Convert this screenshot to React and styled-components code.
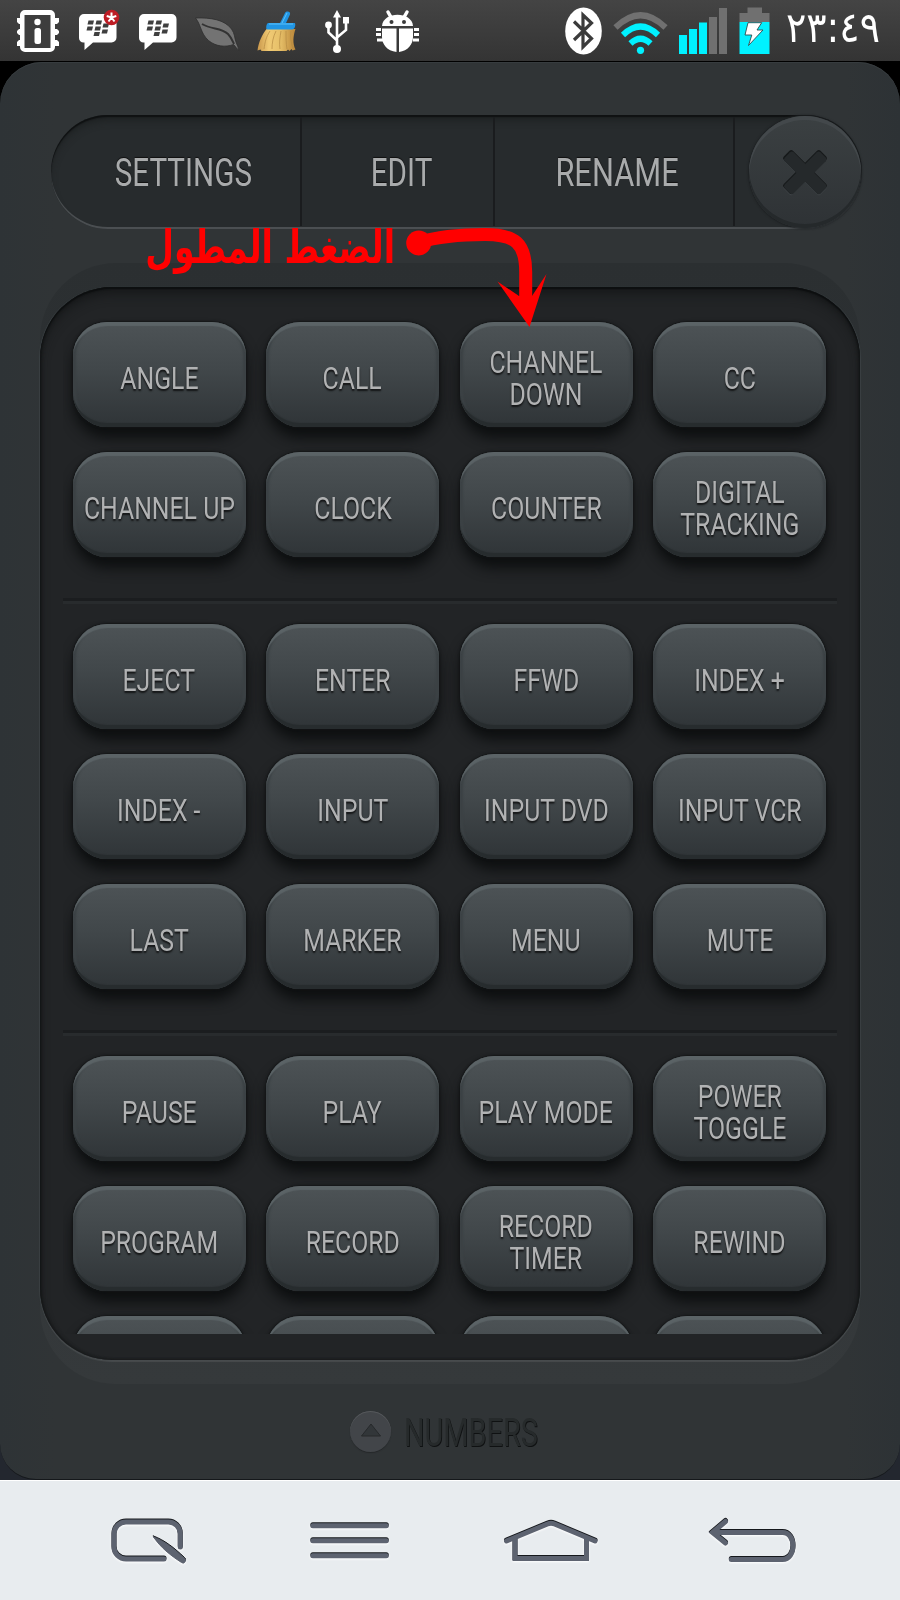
import React from "react";
import styled, { createGlobalStyle } from "styled-components";

// "\n" breaks a label over two lines
const groups = [
  ["ANGLE", "CALL", "CHANNEL\nDOWN", "CC", "CHANNEL UP", "CLOCK", "COUNTER", "DIGITAL\nTRACKING"],
  [
    "EJECT", "ENTER", "FFWD", "INDEX +", "INDEX -", "INPUT", "INPUT DVD", "INPUT VCR",
    "LAST", "MARKER", "MENU", "MUTE",
  ],
  [
    "PAUSE", "PLAY", "PLAY MODE", "POWER\nTOGGLE", "PROGRAM", "RECORD", "RECORD\nTIMER", "REWIND",
    "", "", "", "",
  ],
];

const Glyph = ({ from, to, children }) => (
  <StatusSvg width={to - from} height="61" viewBox={`${from} 0 ${to - from} 61`}>
    {children}
  </StatusSvg>
);

const Bubble = ({ x }) => (
  <g transform={`translate(${x} 0)`}>
    <path
      d="M5 14h27.500a5 5 0 0 1 5 5v18.500a5 5 0 0 1-5 5H14L5.500 50V42.500H4.500A4.500 4.500 0 0 1 0 38V19a5 5 0 0 1 5-5z"
      fill="#fff"
    />
    <g fill="#3f3f3f">
      <path d="M9.500 20.500h5.500l-1 4H8.500zM17.500 20.500H23l-1 4h-5.500z" />
      <path d="M8.500 26.500H14l-1 4H7.500zM16.500 26.500H22l-1 4h-5.500zM24.500 23.500H30l-1 4h-5.500z" />
      <path d="M23.500 29.500H29l-1 4h-5.500zM15.500 32H21l-1 4h-5.500z" />
    </g>
  </g>
);

const StatusBar = () => (
  <StatusRow>
    <Glyph from={0} to={66}>
      <path
        d="M17 18h3v-3a5 5 0 0 1 5-5h25a5 5 0 0 1 5 5v3h4v4l-2 2h-2v5h2l2 2v2l-2 2h-2v5h2l2 2v4h-4v1a5 5 0 0 1-5 5H25a5 5 0 0 1-5-5v-1h-3v-4l2-2h1v-5h-1l-2-2v-2l2-2h1v-5h-1l-2-2z"
        fill="#fff"
      />
      <path d="M24.500 15h26v33h-26z" fill="#3d3d3d" />
      <circle cx="37.500" cy="22" r="3.200" fill="#fff" />
      <rect x="34.500" y="28" width="6.500" height="16" rx="2.500" fill="#fff" />
    </Glyph>
    <Glyph from={66} to={126}>
      <Bubble x={79} />
      <circle cx="111.500" cy="17.500" r="7.800" fill="#bd1c24" />
      <path
        d="M111.500 17.500v-5M111.500 17.500l4.800-1.500M111.500 17.500l3 4M111.500 17.500l-3 4M111.500 17.500l-4.800-1.500"
        stroke="#fff"
        strokeWidth="2"
      />
    </Glyph>
    <Glyph from={126} to={186}>
      <Bubble x={139} />
    </Glyph>
    <Glyph from={186} to={248}>
      <path
        d="M195.500 18c15-.5 29 1.500 36 11 3.500 5 3 9 4.500 13 1 3 2.500 5.500 3 8.500-2-1.500-3.500-4-5.500-6-8 3-18 2-25-4-8-7-7.500-16-13-22.500z"
        fill="#737373"
        stroke="#2d2d2d"
        strokeWidth=".8"
      />
      <path d="M202 24c10 6 19 3 26 10 3 3 4.500 7 6 10" fill="none" stroke="#333" strokeWidth="2" />
    </Glyph>
    <Glyph from={248} to={308}>
      <defs>
        <linearGradient id="straw" x1="0" x2="1">
          <stop offset="0" stopColor="#c9974b" />
          <stop offset=".3" stopColor="#f0ca74" />
          <stop offset=".6" stopColor="#e6bf68" />
          <stop offset="1" stopColor="#b98538" />
        </linearGradient>
      </defs>
      <path
        d="M267 28.500c-5 6-8.500 14-9.500 22l3-1 1 1.500h25l1.500-1.500 1.500 1.500 2-2 1 1.500 3-1c-3-6-2.500-13 0-20.500z"
        fill="url(#straw)"
      />
      <path
        d="M270 31c-4 6-5 11-6 18M276 31c-3 6-4 12-4 18M281 31c-1 6-2 12-1 18M286 31c0 7 0 12 1 18M291 31c-1 6 0 11 2 18"
        stroke="#b58a42"
        strokeWidth=".7"
        fill="none"
      />
      <path d="M268 23h12l5-10c1.500-2.500 6-1.500 5 1.500L286 23h8.500c1.500 0 1 6-2 6.500H267c-1.500-1-.5-6 1-6.500z" fill="#2195e3" />
      <path d="M269 24h24M282 23l5-10" stroke="#5cc2fa" strokeWidth="1" />
    </Glyph>
    <Glyph from={308} to={362}>
      <path d="M337 16v33M328.500 25v7.500l8.500 8M346 21v9l-9 7.500" fill="none" stroke="#fff" strokeWidth="2.600" />
      <path d="M337 10l4 7.500h-8zM343 17h6v6.500h-6z" fill="#fff" />
      <circle cx="328.500" cy="25" r="3.400" fill="#fff" />
      <circle cx="337" cy="49" r="4" fill="#fff" />
    </Glyph>
    <Glyph from={362} to={432}>
      <path d="M388 12l4 7M407 12l-4 7" stroke="#fff" strokeWidth="3.500" strokeLinecap="round" />
      <path d="M382 26c1-15 30-15 31 0z" fill="#fff" />
      <circle cx="391.500" cy="22" r="2" fill="#3a3a3a" />
      <circle cx="404" cy="22" r="2" fill="#3a3a3a" />
      <path d="M382 28.500h14.500V52C387 51 382 44 382 37zM399 28.500h14V37c0 7-5 14-14 15z" fill="#fff" />
      <path
        d="M376 29.500h5M376 34.500h5M377 40h6M414 29.500h5M414 34.500h5M413 40h6"
        stroke="#fff"
        strokeWidth="3"
      />
    </Glyph>
    <Spacer />
    <Glyph from={556} to={608}>
      <ellipse cx="583.500" cy="31" rx="18.300" ry="23.500" fill="#fff" />
      <path
        d="M574 21.500l17.500 17-8.500 8.500V15l8.500 8-17.500 17"
        fill="none"
        stroke="#3b3b3b"
        strokeWidth="3.200"
      />
    </Glyph>
    <Glyph from={608} to={672}>
      <path d="M615.500 27.500q25-24.500 50 0" fill="none" stroke="#707070" strokeWidth="6" />
      <path d="M623 35q17.500-17 35 0" fill="none" stroke="#00f1ff" strokeWidth="6" />
      <path d="M630.500 43.500q10-9.500 20 0" fill="none" stroke="#00f1ff" strokeWidth="6" />
      <circle cx="640.500" cy="50.300" r="3.600" fill="#00f1ff" />
    </Glyph>
    <Glyph from={672} to={732}>
      <path d="M679 35h8v19h-8zM689 29h8v25h-8zM699 22.500h8V54h-8z" fill="#00f1ff" />
      <path d="M709 17h8v37h-8zM719 8h8v46h-8z" fill="#707070" />
    </Glyph>
    <Glyph from={732} to={778}>
      <path d="M739.500 13h8V7.500h14.500V13h7.500v9h-30z" fill="#707070" />
      <path d="M739.500 22h30v32h-30z" fill="#00f1ff" />
      <path d="M748 22.700h13.700L757 30h6l-14.500 15.500 3.300-10.500h-6.800z" fill="#fff" stroke="#2f4a4c" strokeWidth=".9" />
    </Glyph>
    <Clock>٢٣:٤٩</Clock>
  </StatusRow>
);

const NavBar = () => (
  <NavRow>
    <NavSvg viewBox="0 1480 225 120">
      <path d="M180.300 1547v-13a12 12 0 0 0-12-12H126a12 12 0 0 0-12 12v13a12 12 0 0 0 12 12h38" />
      <path d="M153.500 1537c11 4 21 12 31 21.500a2 2 0 0 1-3 4c-11-7-21-15-28-25.500z" fill="#5d6370" stroke="#5d6370" strokeWidth="1" />
    </NavSvg>
    <NavSvg viewBox="225 1480 225 120">
      <path d="M312.800 1525.700h73.500M312.800 1540.700h73.500M312.800 1555.700h73.500" />
    </NavSvg>
    <NavSvg viewBox="450 1480 225 120">
      <path d="M506.500 1541l41-17q3.500-1.300 7 0l40.500 17" />
      <path d="M515 1540v18.500h71.500V1540" />
    </NavSvg>
    <NavSvg viewBox="675 1480 225 120">
      <path d="M716 1532.500h66.500c14 0 14 27 0 27H731.300" />
      <path d="M725.500 1521.500l-13 11 13 10.500" />
      <path d="M710 1532.500l9-6v12z" fill="#5d6370" stroke="none" />
    </NavSvg>
  </NavRow>
);

const Cross = (props) => (
  <g {...props}>
    <rect x="-26" y="-6.500" width="52" height="13" rx="2.500" transform="rotate(45)" />
    <rect x="-26" y="-6.500" width="52" height="13" rx="2.500" transform="rotate(-45)" />
  </g>
);

const App = () => {
  return (
    <Screen>
      <GlobalStyle />
      <StatusBar />
      <Remote>
        <Toolbar>
          <Tab $width={251}>
            <TabText $shift={8} $scale={0.76}>SETTINGS</TabText>
          </Tab>
          <Tab $width={193}>
            <TabText $shift={4} $scale={0.76}>EDIT</TabText>
          </Tab>
          <Tab $width={240}>
            <TabText $shift={3} $scale={0.79}>RENAME</TabText>
          </Tab>
          <Close>
            <svg width="60" height="60" viewBox="-30 -30 60 60">
              <g transform="translate(0 1.200)"><Cross fill="#3c4144" /></g>
              <Cross fill="#16191a" />
              <g transform="translate(.3 .9) scale(.97)"><Cross fill="#25292b" /></g>
            </svg>
          </Close>
        </Toolbar>
        <Halo>
          <Panel>
            <Scroller>
              {groups.map((keys, i) => (
                <React.Fragment key={i}>
                  {i > 0 && <Rule />}
                  <Keys>
                    {keys.map((name, k) => (
                      <Key key={k}>
                        <KeyText>{name}</KeyText>
                      </Key>
                    ))}
                  </Keys>
                </React.Fragment>
              ))}
            </Scroller>
          </Panel>
        </Halo>
        <Numbers>
          <UpButton>
            <svg width="22" height="16" viewBox="0 0 22 16">
              <path d="M1.500 14L11 2l9.500 12z" fill="#323639" stroke="#26292b" strokeWidth="1" />
            </svg>
          </UpButton>
          <NumbersText>NUMBERS</NumbersText>
        </Numbers>
      </Remote>
      <NavBar />
      <Note>الضغط المطول</Note>
      <Arrow width="160" height="110" viewBox="400 220 160 110">
        <circle cx="418.700" cy="243" r="12.500" fill="#f00" />
        <path
          d="M418 242.500C440 236 465 234.500 485 234.500C515 234.500 525.700 243 525.700 272V300"
          fill="none"
          stroke="#f00"
          strokeWidth="13"
        />
        <path d="M529.500 327l-32-45.500 21.500 14.500h13l14.500-22z" fill="#f00" />
      </Arrow>
    </Screen>
  );
};

const GlobalStyle = createGlobalStyle`
  * {
    box-sizing: border-box;
  }
  body {
    margin: 0;
    background: #000;
    font-family: Roboto, "Liberation Sans", sans-serif;
  }
`;

const Screen = styled.div`
  position: relative;
  display: flex;
  flex-direction: column;
  width: 900px;
  height: 1600px;
  overflow: hidden;
  background: linear-gradient(#000 5%, #23272f 90%);
`;

const StatusRow = styled.header`
  display: flex;
  height: 61px;
  background: linear-gradient(#444, #343434);
`;

const StatusSvg = styled.svg`
  display: block;
  flex: none;
`;

const Spacer = styled.div`
  flex: 1;
`;

const Clock = styled.div`
  width: 122px;
  padding-left: 8px;
  color: #fff;
  font: 42px/55px "DejaVu Sans", sans-serif;
  direction: ltr;
  transform: scaleX(0.9);
  transform-origin: 8px center;
  white-space: nowrap;
`;

const Remote = styled.main`
  display: flex;
  flex-direction: column;
  height: 1418px;
  margin-top: 1px;
  padding: 53px 38px 0 40px;
  border-radius: 42px 42px 36px 36px;
  border-bottom: 1px solid #15181b;
  background: linear-gradient(90deg, #2e3336, #303436 6%, #303436 94%, #2d3235);
  box-shadow: inset 0 1px 0 #373c3f;
`;

const Toolbar = styled.nav`
  display: flex;
  flex: none;
  width: 811px;
  height: 114px;
  margin-left: 11px;
  border-radius: 57px;
  background: #272b2d;
  box-shadow: inset 0 2px 1px #0f1112, inset 0 7px 8px -3px #1b1e1f, inset 0 -2px 0 #4b4f52;
`;

const Tab = styled.div`
  display: flex;
  flex: none;
  align-items: center;
  justify-content: center;
  width: ${(props) => props.$width}px;
  margin: 2px 0 3px;
  border-right: 2px solid #1a1c1e;
`;

const TabText = styled.span`
  position: relative;
  top: 1px;
  left: ${(props) => props.$shift}px;
  color: #a9abac;
  font-size: 39px;
  line-height: 46px;
  text-shadow: 0 -1px 1px #111;
  transform: scaleX(${(props) => props.$scale});
  white-space: nowrap;
`;

const Close = styled.button`
  display: flex;
  align-items: center;
  justify-content: center;
  width: 112px;
  height: 112px;
  margin: 1px 1px 1px auto;
  padding: 0;
  border: 0;
  border-radius: 50%;
  background: linear-gradient(#3b4042, #2e3235);
  box-shadow: inset 0 4px 0 #43484b, inset 0 -4px 0 #25292b, 0 0 2px 1px #1d2022;
`;

const Halo = styled.section`
  flex: none;
  width: 820px;
  height: 1121px;
  margin-top: 34px;
  padding: 24px 0;
  border-radius: 76px;
  background: linear-gradient(#2b2f31, #2f3336 30%, #303437 70%, #35393b);
`;

const Panel = styled.div`
  height: 1073px;
  padding: 15px 23px 0;
  border-radius: 72px;
  background: #222426;
  box-shadow: inset 0 2px 1px #0d0f10, inset 0 9px 12px -3px #151718, inset 2px 0 3px #17191a,
    inset -2px 0 3px #17191a, 0 2px 1px #474b4d, 1px 0 1px #3a4043, -1px 0 1px #3a4043;
`;

const Scroller = styled.div`
  height: 1032px;
  padding-top: 20px;
  overflow: hidden;
`;

const Keys = styled.div`
  display: grid;
  grid-template-columns: repeat(4, 173px);
  grid-auto-rows: 105px;
  gap: 25px 20.500px;
  padding-left: 9.500px;
`;

const Rule = styled.div`
  height: 6px;
  margin: 41px 0 20px;
  border-top: 3px solid #1b1d1f;
  border-bottom: 3px solid #282b2d;
`;

const Key = styled.button`
  display: flex;
  align-items: center;
  justify-content: center;
  height: 105px;
  padding: 6px 0 0;
  border: 0;
  border-radius: 34px;
  background: linear-gradient(#4d5356, #41474a 45%, #2f3437);
  box-shadow: inset 0 5px 1px -1px #5b6366, inset 0 -5px 1px -1px #272c2e, inset 4px 0 2px -1px #3c4245,
    inset -4px 0 2px -1px #3c4245, 0 0 2px 1px #131516, 0 11px 13px 0 #0d0f10;
`;

const KeyText = styled.span`
  color: #b1b2b3;
  font: 32px/32px Roboto, sans-serif;
  text-align: center;
  text-shadow: 0 2px 2px #121314;
  transform: scaleX(0.775);
  white-space: pre;
`;

const Numbers = styled.footer`
  display: flex;
  align-items: center;
  height: 94px;
  padding-left: 310px;
`;

const UpButton = styled.div`
  display: flex;
  align-items: center;
  justify-content: center;
  width: 41px;
  height: 41px;
  padding-bottom: 2px;
  border-radius: 50%;
  background: #424549;
  box-shadow: inset 0 1px 0 #55585b, 0 1px 1px #25282a;
`;

const NumbersText = styled.span`
  margin: 3px 0 0 13px;
  color: #262a2b;
  font-size: 38px;
  text-shadow: 1px 1px 0 #0f1112;
  transform: scaleX(0.76);
  transform-origin: left center;
`;

const NavRow = styled.nav`
  display: grid;
  grid-template-columns: repeat(4, 225px);
  height: 120px;
  background: #e8ecef;
  box-shadow: inset 0 1px 0 #fff;
`;

const NavSvg = styled.svg`
  width: 225px;
  height: 120px;
  fill: none;
  stroke: #5d6370;
  stroke-width: 5px;
  stroke-linecap: round;
  filter: drop-shadow(0 -1px 0 #15181c) drop-shadow(0 1px 1px #fff);
`;

const Note = styled.div`
  position: absolute;
  top: 219px;
  right: 505px;
  color: #f00;
  font: bold 46px/56px "DejaVu Sans", sans-serif;
  direction: rtl;
  transform: scaleX(0.72);
  transform-origin: right center;
  white-space: nowrap;
`;

const Arrow = styled.svg`
  position: absolute;
  top: 220px;
  left: 400px;
`;

export default App;
